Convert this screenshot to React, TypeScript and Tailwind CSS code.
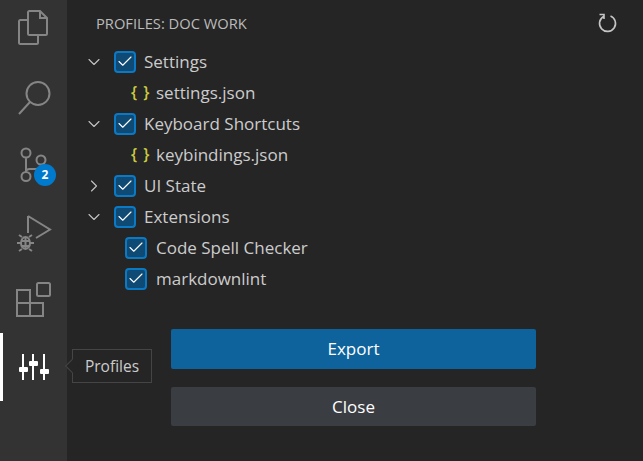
import { Check, ChevronDown, ChevronRight } from 'lucide-react';
import type { ReactNode } from 'react';

const rows = [
    { kind: 'group', label: 'Settings', open: true },
    { kind: 'file', label: 'settings.json' },
    { kind: 'group', label: 'Keyboard Shortcuts', open: true },
    { kind: 'file', label: 'keybindings.json' },
    { kind: 'group', label: 'UI State', open: false },
    { kind: 'group', label: 'Extensions', open: true },
    { kind: 'item', label: 'Code Spell Checker' },
    { kind: 'item', label: 'markdownlint' },
];

function Box() {
    return (
        <span className="flex h-[22px] w-[22px] shrink-0 items-center justify-center rounded-[4px] border-2 border-[#0b79c4] bg-[#0e4a74]">
            <Check className="h-[19px] w-[19px] text-white" strokeWidth={1.5} />
        </span>
    );
}

function Row({ kind, label, open }: { kind: string; label: string; open?: boolean }) {
    if (kind === 'file') {
        return (
            <div className="flex h-[31px] items-center pl-[64px]">
                <span className="w-[25px] -translate-y-[1px] text-[16px] font-semibold leading-none tracking-[1px] text-[#cbcb41]">{'{ }'}</span>
                <span>{label}</span>
            </div>
        );
    }
    if (kind === 'item') {
        return (
            <div className="flex h-[31px] items-center gap-[9px] pl-[58px]">
                <Box />
                <span>{label}</span>
            </div>
        );
    }
    return (
        <div className="flex h-[31px] items-center pl-[17px]">
            <span className="w-[30px]">
                {open ? (
                    <ChevronDown className="h-[20px] w-[20px] text-[#c5c5c5]" strokeWidth={1.3} />
                ) : (
                    <ChevronRight className="h-[20px] w-[20px] text-[#c5c5c5]" strokeWidth={1.3} />
                )}
            </span>
            <Box />
            <span className="ml-[8px]">{label}</span>
        </div>
    );
}

function Activity({ children, active }: { children: ReactNode; active?: boolean }) {
    return (
        <div className={`relative w-[67px] ${active ? 'h-[68px] border-l-[3px] border-white' : 'h-[67px]'}`}>
            {children}
        </div>
    );
}

function Glyph({ d, className }: { d: string; className?: string }) {
    return (
        <svg viewBox="0 0 67 67" fill="none" stroke="currentColor" strokeWidth="2" className={`h-[67px] w-[67px] text-[#858585] ${className ?? ''}`}>
            <path d={d} />
        </svg>
    );
}

export default function App() {
    return (
        <div className="flex h-[461px] w-[643px] overflow-hidden bg-[#252526] font-['Open_Sans',sans-serif] text-[17px] text-[#cccccc]">
            <div className="h-full w-[67px] shrink-0 bg-[#333333]">
                <div className="-mt-[2px]">
                    <Activity>
                        <Glyph d="M28 23H20.500Q19 23 19 24.500V45.500Q19 47 20.500 47H36.500Q38 47 38 45.500V38M29.500 14H40L47 21V36.500Q47 38 45.500 38H29.500Q28 38 28 36.500V15.500Q28 14 29.500 14ZM40 14V21H47" className="translate-y-[-1px]" />
                    </Activity>
                    <Activity>
                        <Glyph d="M49.500 28.500A11.500 11.500 0 1 1 26.500 28.500A11.500 11.500 0 1 1 49.500 28.500ZM30 37L19 49" />
                    </Activity>
                    <Activity>
                        <Glyph d="M30.500 21A4.500 4.500 0 1 1 21.500 21A4.500 4.500 0 1 1 30.500 21ZM45.500 28A4.500 4.500 0 1 1 36.500 28A4.500 4.500 0 1 1 45.500 28ZM30.500 44.500A4.500 4.500 0 1 1 21.500 44.500A4.500 4.500 0 1 1 30.500 44.500ZM26 25.500V40M41 32.500Q41 37 36 37H30Q26 37 26 40" />
                        <span className="absolute left-[34px] top-[32px] flex h-[22px] w-[22px] items-center justify-center rounded-full bg-[#007acc] text-[12px] font-bold text-white">2</span>
                    </Activity>
                    <Activity>
                        <Glyph d="M28 17V34M28 17L50 30.500L36 39M21 44A4.500 6 0 1 0 30 44A4.500 6 0 1 0 21 44ZM25.500 38V50M21 42H30M21 47H30M22 38L19 36M29 38L32 36M21 44H17M30 44H34M22 50L19 52M29 50L32 52" />
                    </Activity>
                    <Activity>
                        <Glyph d="M17 24H30V37H43V50H17ZM17 37H30V50M38.500 17H48.500Q50 17 50 18.500V28.500Q50 30 48.500 30H38.500Q37 30 37 28.500V18.500Q37 17 38.500 17Z" />
                    </Activity>
                    <Activity active>
                        <svg viewBox="0 0 64 67" className="h-[67px] w-[64px] text-white" fill="currentColor">
                            <rect x="19" y="21" width="2" height="26" />
                            <rect x="29" y="21" width="2" height="26" />
                            <rect x="40" y="21" width="2" height="26" />
                            <rect x="16" y="34" width="9" height="5" rx="1" />
                            <rect x="26" y="28" width="9" height="5" rx="1" />
                            <rect x="37" y="36" width="9" height="5" rx="1" />
                        </svg>
                    </Activity>
                </div>
            </div>

            <div className="relative flex-1">
                <div className="flex h-[46px] items-center justify-between pl-[29px] pr-[25px] text-[14.7px] text-[#bbbbbb]">
                    <span>PROFILES: DOC WORK</span>
                    <svg viewBox="0 0 22 22" fill="none" stroke="currentColor" strokeWidth="1.6" className="h-[22px] w-[22px] text-[#c5c5c5]">
                        <path d="M7.500 4.500A8 8 0 1 0 14.500 4M3.500 2.500H8V7" />
                    </svg>
                </div>
                <div>
                    {rows.map((r) => (
                        <Row key={r.label} {...r} />
                    ))}
                </div>
                <div className="mt-[35px] flex flex-col gap-[18px] pl-[104px] pr-[107px] text-white">
                    <button className="h-[40px] rounded-[2px] bg-[#0e639c]">Export</button>
                    <button className="h-[39px] rounded-[2px] bg-[#3a3d41]">Close</button>
                </div>

                {/* tooltip over the activity bar edge */}
                <div className="absolute left-[5px] top-[349px] flex h-[34px] w-[80px] items-center justify-center border border-[#454545] bg-[#252526] pt-[2px] text-[15.500px] text-[#cccccc]">
                    Profiles
                    <span className="absolute -left-[6px] top-[11px] h-[10px] w-[10px] rotate-45 border-b border-l border-[#454545] bg-[#252526]" />
                </div>
            </div>
        </div>
    );
}
